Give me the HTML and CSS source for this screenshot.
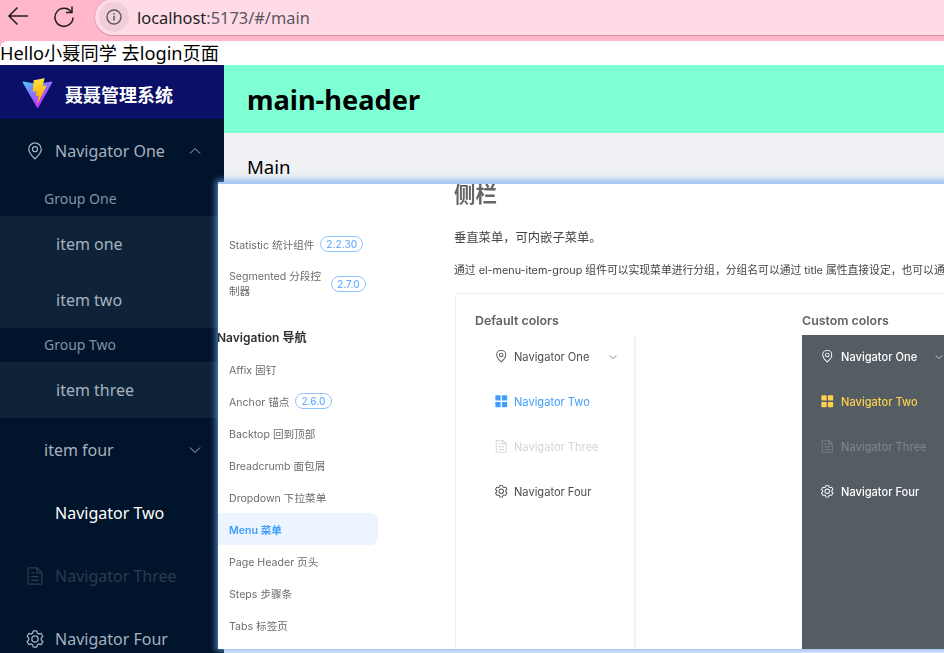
FILE: index.html
```html
<!DOCTYPE html>
<html lang="zh-CN">
<head>
<meta charset="utf-8">
<title>Main</title>
<link rel="stylesheet" href="styles.css">
</head>
<body>
<svg class="defs" width="0" height="0" aria-hidden="true">
  <defs>
    <symbol id="i-location" viewBox="0 0 1024 1024"><path fill="currentColor" d="M800 416a288 288 0 1 0-576 0c0 118.144 94.528 272.128 288 456.576C705.472 688.128 800 534.144 800 416M512 960C277.312 746.688 160 565.312 160 416a352 352 0 0 1 704 0c0 149.312-117.312 330.688-352 544"/><path fill="currentColor" d="M512 512a96 96 0 1 0 0-192 96 96 0 0 0 0 192m0 64a160 160 0 1 1 0-320 160 160 0 0 1 0 320"/></symbol>
    <symbol id="i-doc" viewBox="0 0 1024 1024"><path fill="currentColor" d="M832 384H576V128H192v768h640zm-26.496-64L640 154.496V320zM160 64h480l256 256v608a32 32 0 0 1-32 32H160a32 32 0 0 1-32-32V96a32 32 0 0 1 32-32m160 448h384v64H320zm0-192h160v64H320zm0 384h384v64H320z"/></symbol>
    <symbol id="i-setting" viewBox="0 0 1024 1024"><path fill="currentColor" d="M600.704 64a32 32 0 0 1 30.464 22.208l35.2 109.376c14.784 7.232 28.928 15.36 42.432 24.512l112.384-24.192a32 32 0 0 1 34.432 15.36L944.32 364.8a32 32 0 0 1-4.032 37.504l-77.12 85.12a357.12 357.12 0 0 1 0 49.024l77.12 85.248a32 32 0 0 1 4.032 37.504l-88.704 153.6a32 32 0 0 1-34.432 15.296L708.8 803.904c-13.44 9.088-27.648 17.28-42.368 24.512l-35.264 109.376A32 32 0 0 1 600.704 960H423.296a32 32 0 0 1-30.464-22.208L357.696 828.48a351.616 351.616 0 0 1-42.56-24.64l-112.32 24.256a32 32 0 0 1-34.432-15.36L79.68 659.2a32 32 0 0 1 4.032-37.504l77.12-85.248a357.12 357.12 0 0 1 0-48.896l-77.12-85.248A32 32 0 0 1 79.68 364.8l88.704-153.6a32 32 0 0 1 34.432-15.296l112.32 24.256c13.568-9.152 27.776-17.408 42.56-24.64l35.2-109.312A32 32 0 0 1 423.232 64H600.64zm-23.424 64H446.72l-36.352 113.088-24.512 11.968a294.113 294.113 0 0 0-34.816 20.096l-22.656 15.36-116.224-25.088-65.28 113.152 79.68 88.192-1.92 27.136a293.12 293.12 0 0 0 0 40.192l1.92 27.136-79.808 88.192 65.344 113.152 116.224-25.024 22.656 15.296a294.113 294.113 0 0 0 34.816 20.096l24.512 11.968L446.72 896h130.688l36.48-113.152 24.448-11.904a288.282 288.282 0 0 0 34.752-20.096l22.592-15.296 116.288 25.024 65.28-113.152-79.744-88.192 1.92-27.136a293.12 293.12 0 0 0 0-40.256l-1.92-27.136 79.808-88.128-65.344-113.152-116.288 24.96-22.592-15.232a287.616 287.616 0 0 0-34.752-20.096l-24.448-11.904L577.344 128zM512 320a192 192 0 1 1 0 384 192 192 0 0 1 0-384m0 64a128 128 0 1 0 0 256 128 128 0 0 0 0-256"/></symbol>
    <symbol id="i-menu" viewBox="0 0 16 16"><rect fill="currentColor" x="1.5" y="1.5" width="5.8" height="5.8" rx=".7"/><rect fill="currentColor" x="8.7" y="1.5" width="5.8" height="5.8" rx=".7"/><rect fill="currentColor" x="1.5" y="8.7" width="5.8" height="5.8" rx=".7"/><rect fill="currentColor" x="8.7" y="8.7" width="5.8" height="5.8" rx=".7"/></symbol>
    <symbol id="i-down" viewBox="0 0 12 12"><path fill="none" stroke="currentColor" stroke-width="1" d="M1 3.5 6 8.5 11 3.5"/></symbol>
    <symbol id="i-up" viewBox="0 0 12 12"><path fill="none" stroke="currentColor" stroke-width="1" d="M1 8.5 6 3.5 11 8.5"/></symbol>
    <linearGradient id="vite-a" x1="6" y1="33" x2="235" y2="344" gradientUnits="userSpaceOnUse"><stop offset="0" stop-color="#41D1FF"/><stop offset="1" stop-color="#BD34FE"/></linearGradient>
    <linearGradient id="vite-b" x1="194.651" y1="8.818" x2="236.076" y2="292.989" gradientUnits="userSpaceOnUse"><stop offset="0" stop-color="#FFEA83"/><stop offset=".083" stop-color="#FFDD35"/><stop offset="1" stop-color="#FFA800"/></linearGradient>
  </defs>
</svg>

<div class="browser-bar">
  <svg class="nav-btn" width="24" height="24" viewBox="0 0 24 24"><path fill="none" stroke="#1f1f1f" stroke-width="1.5" d="M21 14H2M10.5 5.5 2 14l8.5 8.5" transform="translate(0 -2)"/></svg>
  <svg class="nav-btn reload" width="24" height="24" viewBox="0 0 24 24"><path fill="none" stroke="#1f1f1f" stroke-width="1.5" d="M19.4 8.2A9 9 0 1 0 21 13.5M20 2.5v6h-6"/></svg>
  <div class="omnibox">
    <span class="info"><svg width="16" height="16" viewBox="0 0 16 16"><circle cx="8" cy="8" r="7" fill="none" stroke="#5f5560" stroke-width="1.4"/><path d="M8 7v4.4M8 4.3v1.5" stroke="#5f5560" stroke-width="1.5"/></svg></span>
    <span class="url"><span class="host">localhost</span>:5173/#/main</span>
  </div>
</div>

<div class="page">
  <div class="hello">Hello小聂同学 去login页面</div>
  <div class="layout">
    <aside class="aside">
      <div class="logo">
        <svg class="logo-img" width="31" height="31" viewBox="0 0 410 404"><path d="M399.641 59.5246L215.643 388.545C211.844 395.338 202.084 395.378 198.228 388.618L10.5817 59.5563C6.38087 52.1896 12.6802 43.2665 21.0281 44.7586L205.223 77.6824C206.398 77.8924 207.601 77.8904 208.776 77.6763L389.119 44.8058C397.439 43.2894 403.768 52.1434 399.641 59.5246Z" fill="url(#vite-a)"/><path d="M292.965 1.5744L156.801 28.2552C154.563 28.6937 152.906 30.5903 152.771 32.8664L144.395 174.33C144.198 177.662 147.258 180.248 150.51 179.498L188.42 170.749C191.967 169.931 195.172 173.055 194.443 176.622L183.18 231.775C182.422 235.487 185.907 238.661 189.532 237.56L212.947 230.446C216.577 229.344 220.065 232.527 219.297 236.242L201.398 322.875C200.278 328.294 207.486 331.249 210.492 326.603L212.5 323.5L323.454 102.072C325.312 98.3645 322.108 94.137 318.036 94.9228L279.014 102.454C275.347 103.161 272.227 99.746 273.262 96.1583L298.731 7.86689C299.767 4.27314 296.636 0.855181 292.965 1.5744Z" fill="url(#vite-b)"/></svg>
        <span class="logo-title">聂聂管理系统</span>
      </div>
      <nav class="side-menu">
        <div class="side-row"><svg class="side-icon"><use href="#i-location"/></svg><span>Navigator One</span><svg class="side-arrow"><use href="#i-up"/></svg></div>
        <div class="side-group">Group One</div>
        <div class="side-sub">item one</div>
        <div class="side-sub">item two</div>
        <div class="side-group">Group Two</div>
        <div class="side-sub">item three</div>
        <div class="side-row side-nested"><span>item four</span><svg class="side-arrow"><use href="#i-down"/></svg></div>
        <div class="side-row side-active"><span class="side-spacer"></span><span>Navigator Two</span></div>
        <div class="side-row side-disabled"><svg class="side-icon"><use href="#i-doc"/></svg><span>Navigator Three</span></div>
        <div class="side-row"><svg class="side-icon"><use href="#i-setting"/></svg><span>Navigator Four</span></div>
      </nav>
    </aside>
    <section class="right">
      <header class="main-header"><h1>main-header</h1></header>
      <main class="main">Main</main>
    </section>
  </div>
</div>

<div class="shot">
  <div class="shot-inner">
    <div class="doc-nav">
      <div class="doc-link">Statistic 统计组件<span class="badge">2.2.30</span></div>
      <div class="doc-link doc-link-tall"><span class="wrap">Segmented 分段控制器</span><span class="badge">2.7.0</span></div>
      <div class="doc-heading">Navigation 导航</div>
      <div class="doc-link">Affix 固钉</div>
      <div class="doc-link">Anchor 锚点<span class="badge">2.6.0</span></div>
      <div class="doc-link">Backtop 回到顶部</div>
      <div class="doc-link">Breadcrumb 面包屑</div>
      <div class="doc-link">Dropdown 下拉菜单</div>
      <div class="doc-link doc-active">Menu 菜单</div>
      <div class="doc-link">Page Header 页头</div>
      <div class="doc-link">Steps 步骤条</div>
      <div class="doc-link">Tabs 标签页</div>
    </div>
    <div class="doc-body">
      <h2 class="doc-title">侧栏</h2>
      <p class="doc-lead">垂直菜单，可内嵌子菜单。</p>
      <p class="doc-desc">通过 el-menu-item-group 组件可以实现菜单进行分组，分组名可以通过 title 属性直接设定，也可以通过具名插槽来设定。</p>
      <div class="demo">
        <div class="demo-col">
          <h5 class="demo-title">Default colors</h5>
          <div class="demo-menu">
            <div class="demo-row"><svg class="demo-icon"><use href="#i-location"/></svg><span>Navigator One</span><svg class="demo-arrow"><use href="#i-down"/></svg></div>
            <div class="demo-row demo-on"><svg class="demo-icon"><use href="#i-menu"/></svg><span>Navigator Two</span></div>
            <div class="demo-row demo-off"><svg class="demo-icon"><use href="#i-doc"/></svg><span>Navigator Three</span></div>
            <div class="demo-row"><svg class="demo-icon"><use href="#i-setting"/></svg><span>Navigator Four</span></div>
          </div>
        </div>
        <div class="demo-col">
          <h5 class="demo-title">Custom colors</h5>
          <div class="demo-menu demo-dark">
            <div class="demo-row"><svg class="demo-icon"><use href="#i-location"/></svg><span>Navigator One</span><svg class="demo-arrow"><use href="#i-down"/></svg></div>
            <div class="demo-row demo-on"><svg class="demo-icon"><use href="#i-menu"/></svg><span>Navigator Two</span></div>
            <div class="demo-row demo-off"><svg class="demo-icon"><use href="#i-doc"/></svg><span>Navigator Three</span></div>
            <div class="demo-row"><svg class="demo-icon"><use href="#i-setting"/></svg><span>Navigator Four</span></div>
          </div>
        </div>
      </div>
    </div>
  </div>
</div>
</body>
</html>
```
FILE: styles.css
```css
* { box-sizing: border-box; }
html, body { margin: 0; height: 100%; overflow: hidden; }
body {
  background: #ffb8cb;
  font-family: "Noto Sans", "Noto Sans CJK SC", sans-serif;
  color: #000;
  position: relative;
}
.defs { position: absolute; }

/* browser chrome */
.browser-bar {
  height: 41px;
  display: flex;
  align-items: flex-start;
  padding-left: 7px;
}
.nav-btn { margin-top: 4px; flex: none; }
.reload { margin-left: 21px; }
.omnibox {
  margin-left: 19px;
  height: 36px;
  margin-top: -1px;
  flex: 1;
  background: #fedbe7;
  border-radius: 18px 0 0 18px;
  box-shadow: 0 1px 1px rgba(120, 90, 100, .35), -1px 0 1px rgba(120, 90, 100, .15);
  display: flex;
  align-items: center;
  padding-left: 4px;
}
.info {
  width: 30px;
  height: 30px;
  border-radius: 50%;
  background: #f0cfd9;
  display: flex;
  align-items: center;
  justify-content: center;
}
.url { margin-left: 8px; font-size: 16.4px; color: #5b5560; white-space: nowrap; }
.host { color: #1f1f1f; }

/* app page */
.page {
  height: 612px;
  background: #fff;
  border-radius: 8px 0 0 0;
  overflow: hidden;
}
.hello { height: 24px; font-size: 18.2px; line-height: 24px; white-space: nowrap; }
.layout { display: flex; height: 588px; }
.aside { width: 224px; flex: none; background: #00142b; color: #a6b1bf; }
.logo {
  height: 54px;
  background: #0a0f68;
  display: flex;
  align-items: center;
  padding-left: 22px;
  gap: 12px;
}
.logo-img { margin-top: 2px; }
.logo-title { color: #fff; font-size: 18px; line-height: 26px; padding-top: 6px; font-weight: 700; white-space: nowrap; }
.side-menu { font-size: 16px; }
.side-row {
  height: 63px;
  display: flex;
  align-items: center;
  padding: 0 23px 0 25px;
  white-space: nowrap;
}
.side-icon { width: 20px; height: 20px; margin-right: 10px; flex: none; }
.side-spacer { width: 30px; flex: none; }
.side-arrow { width: 12px; height: 12px; margin-left: auto; flex: none; }
.side-group { height: 34px; line-height: 34px; padding-left: 44px; font-size: 14px; color: #8591a0; }
.side-sub { height: 56px; line-height: 56px; padding-left: 56px; background: #0e2338; }
.side-nested { padding-left: 44px; }
.side-active { color: #fff; }
.side-disabled { color: #2c3b4d; }

.right { flex: 1; display: flex; flex-direction: column; min-width: 0; }
.main-header {
  height: 68px;
  background: #7fffd4;
  display: flex;
  align-items: center;
  padding: 1px 0 0 23px;
}
.main-header h1 { margin: 0; font-size: 27.2px; font-weight: 700; }
.main { flex: 1; background: #eff1f5; padding: 20px 23px; font-size: 18.6px; line-height: 27px; }

/* pasted docs screenshot floating over the app */
.shot {
  position: absolute;
  left: 218px;
  top: 182px;
  right: -4px;
  height: 467px;
  background: #fff;
  border-top: 2px solid #a5c9f3;
  box-shadow: 0 0 6px 2px rgba(110, 170, 240, .75);
  overflow: hidden;
  font-family: Inter, "Noto Sans CJK SC", sans-serif;
}
.shot-inner { display: flex; height: 100%; filter: blur(.3px); }
.doc-nav { width: 160px; flex: none; padding-top: 44px; margin-right: 76px; color: #6b6d72; font-size: 10.6px; }
.doc-link { height: 32px; display: flex; align-items: center; padding-left: 11px; white-space: nowrap; }
.doc-link-tall { height: 48px; line-height: 15px; }
.wrap { width: 96px; white-space: normal; flex: none; }
.doc-heading { margin: 13px 0 0 -1px; height: 32px; padding-top: 1px; line-height: 32px; font-size: 12px; font-weight: 600; color: #303133; white-space: nowrap; }
.doc-active { background: #ecf5ff; color: #409eff; font-weight: 600; border-radius: 0 8px 8px 0; }
.badge {
  margin-left: 6px;
  height: 16px;
  padding: 0 5px;
  border: 1px solid #8fc3ff;
  border-radius: 8px;
  color: #6aaeff;
  font-size: 10px;
  font-weight: 500;
  line-height: 14px;
  flex: none;
}
.doc-body { flex: 1; min-width: 0; color: #55575c; }
.doc-title { margin: 0; height: 20px; line-height: 20px; font-size: 21.5px; font-weight: 700; color: #666; }
.doc-lead { margin: 24px 0 0; height: 20px; line-height: 20px; font-size: 12.3px; color: #444; white-space: nowrap; }
.doc-desc { margin: 15px 0 0; height: 16px; line-height: 16px; font-size: 10.8px; color: #444; white-space: nowrap; }
.demo {
  margin: 14px 0 0 1px;
  width: 700px;
  height: 400px;
  border: 1px solid #e9ebef;
  border-radius: 3px;
  display: flex;
  padding-left: 19px;
}
.demo-col { flex: none; width: 327px; }
.demo-title { margin: 0; padding-top: 18px; height: 41px; line-height: 17px; font-size: 12.4px; font-weight: 600; color: #606266; }
.demo-menu { width: 161px; height: 320px; border-right: 2px solid #f0f1f4; color: #4b4d52; font-size: 11.1px; }
.demo-row { height: 45px; display: flex; align-items: center; padding: 0 17px 2px 19px; white-space: nowrap; }
.demo-icon { width: 14.5px; height: 14.5px; margin-right: 5.5px; flex: none; }
.demo-arrow { width: 8px; height: 8px; margin-left: auto; flex: none; }
.demo-on { color: #409eff; }
.demo-off { color: #d3d4d6; }
.demo-dark { width: 160px; background: #545c64; border-right: 0; color: #fff; font-weight: 500; }
.demo-dark .demo-on { color: #ffd04b; }
.demo-dark .demo-off { color: #7b8289; }
.demo-dark .demo-row { padding-left: 18px; }
.demo-dark .demo-icon { margin-right: 6.5px; }
.demo-dark .demo-arrow { margin-left: 18px; }
```
